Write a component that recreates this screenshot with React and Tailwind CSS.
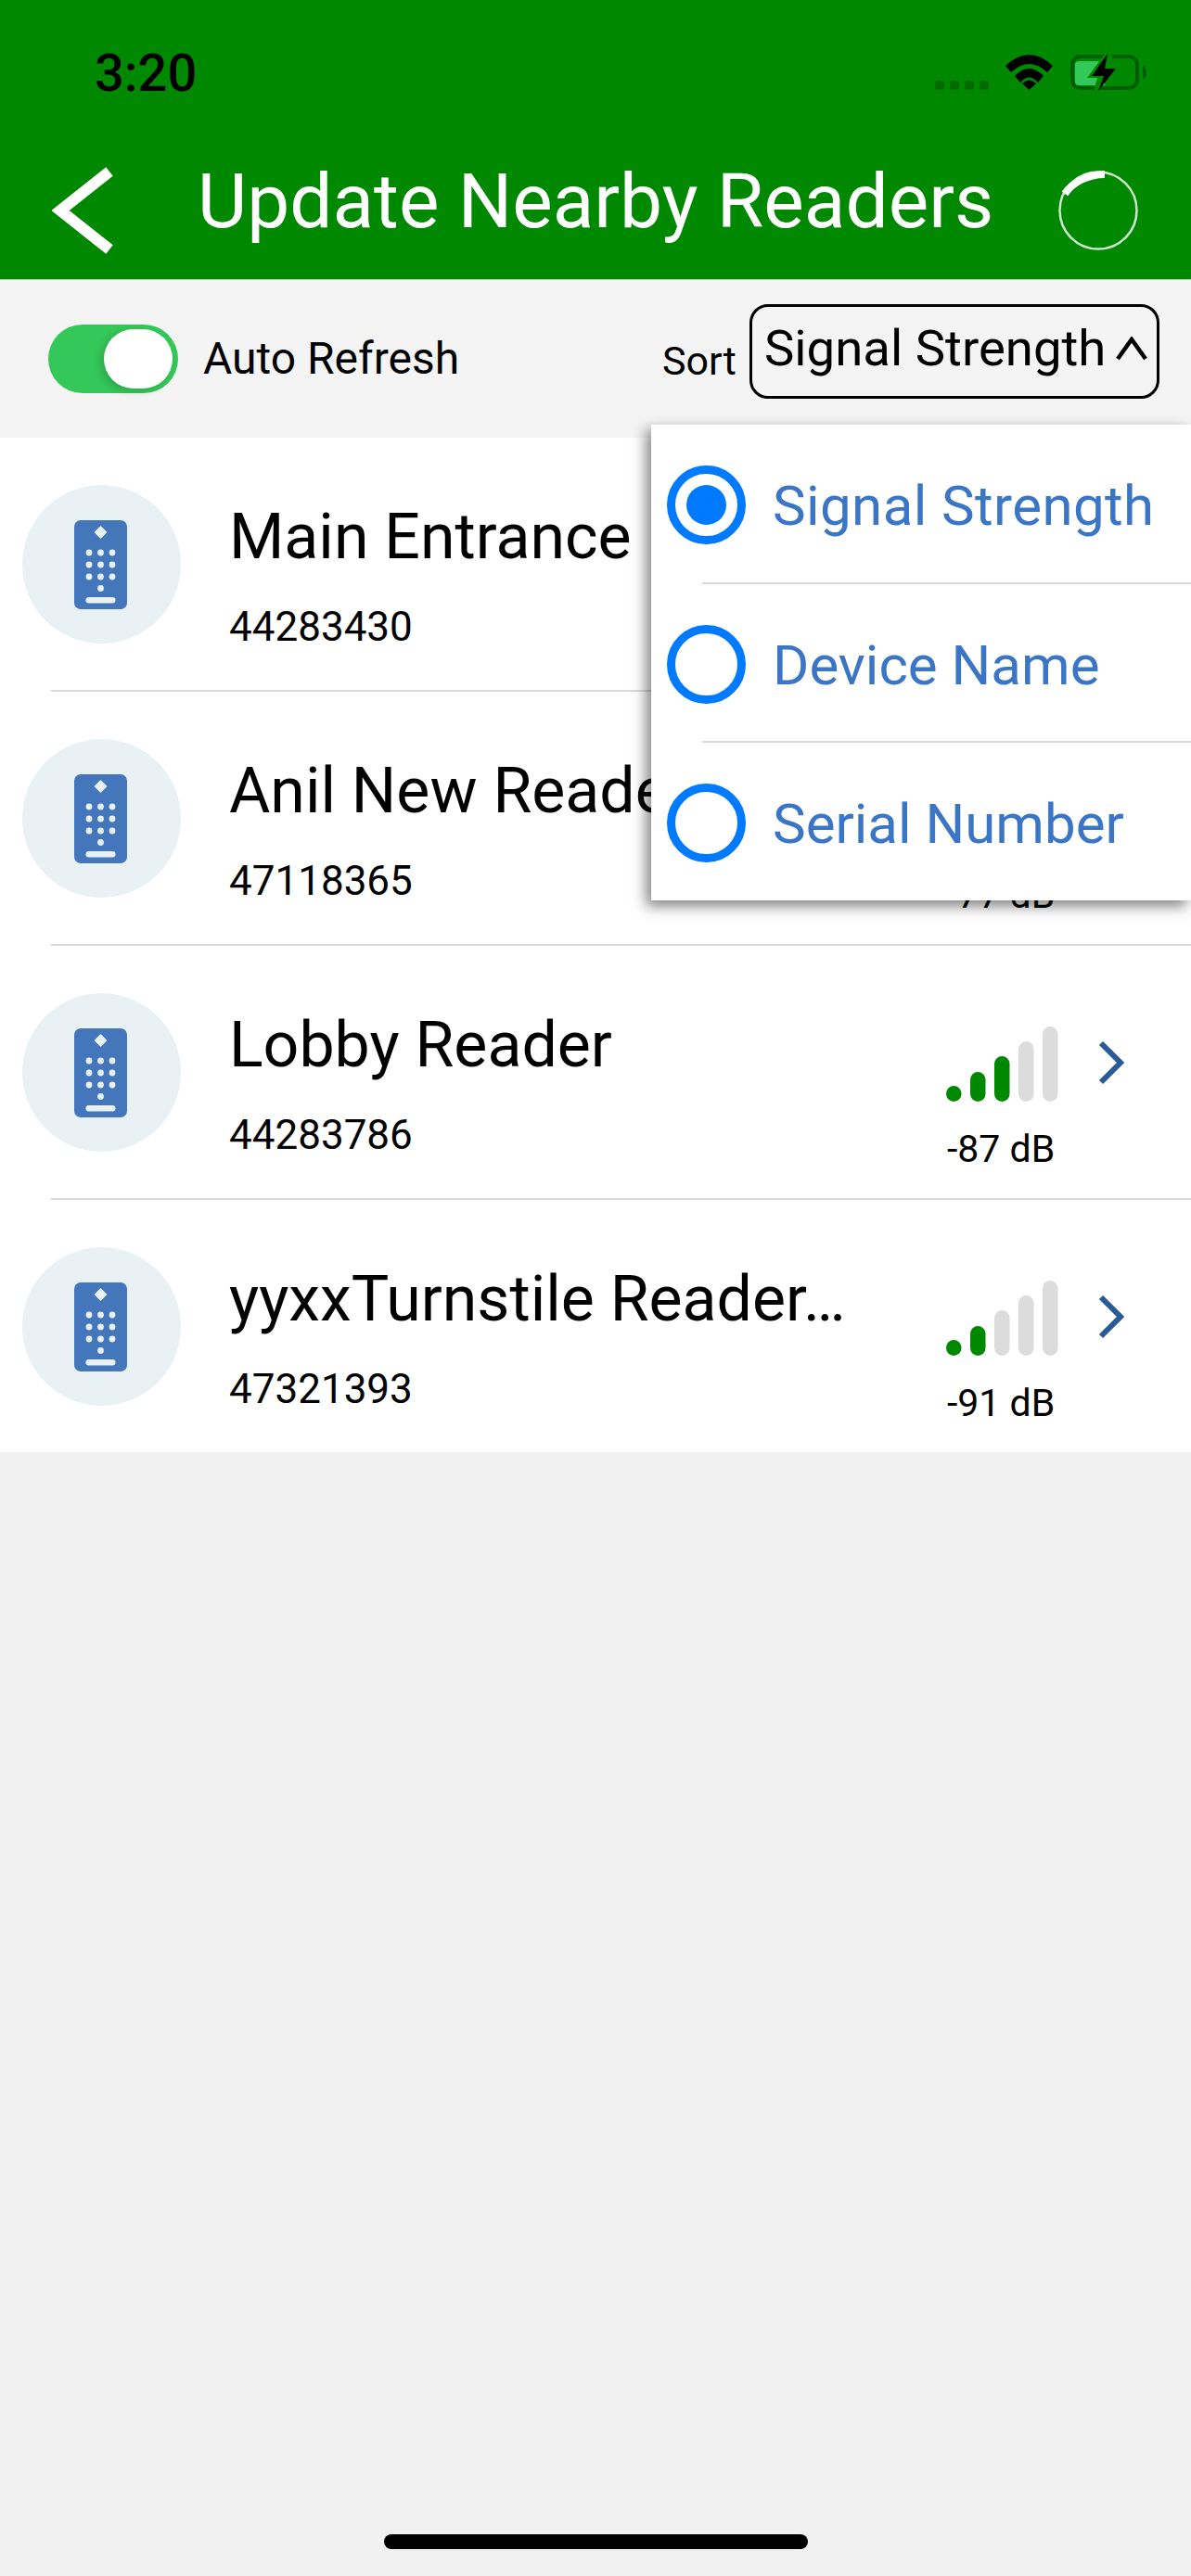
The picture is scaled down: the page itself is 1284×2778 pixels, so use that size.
const FONT = "font-['Roboto',sans-serif]";

function Remote() {
  const ys = [596, 609, 622];
  const xs = [96, 108.5, 121];
  return (
    <svg width="171" height="171" viewBox="24 523 171 171" className="shrink-0">
      <circle cx="109.5" cy="608.5" r="85.5" fill="#e9f1f5" />
      <rect x="80" y="561" width="57" height="96" rx="7" fill="#4376bb" />
      <path d="M108.5 568l6 6-6 6-6-6z" fill="#e9f1f5" stroke="#e9f1f5" strokeWidth="1.5" strokeLinejoin="round" />
      {ys.map((y) => xs.map((x) => <circle key={`${x}-${y}`} cx={x} cy={y} r="3.4" fill="#e9f1f5" />))}
      <circle cx="108.5" cy="634.5" r="3.4" fill="#e9f1f5" />
      <rect x="92.5" y="644" width="32" height="6.5" rx="3.2" fill="#e9f1f5" />
    </svg>
  );
}

function Signal({ level }) {
  const bars = [
    { x: 0, h: 17 },
    { x: 26, h: 32 },
    { x: 52, h: 49 },
    { x: 78, h: 65 },
    { x: 104, h: 81 },
  ];
  return (
    <svg width="121" height="81" viewBox="0 0 121 81" className="block">
      {bars.map((b, i) => (
        <rect key={b.x} x={b.x} y={81 - b.h} width="16.5" height={b.h} rx="8.25" fill={i < level ? "#008800" : "#dcdcdc"} />
      ))}
    </svg>
  );
}

function Row({ name, serial, db, level, last }) {
  return (
    <div>
      <div className="flex h-[272px] items-center pl-[24px]">
        <Remote />
        <div className="ml-[52px] flex w-[773px] shrink-0 flex-col pt-[25px]">
          <div className="text-[68px] leading-[80px] text-black">{name}</div>
          <div className="mt-[31px] text-[44px] leading-[52px] text-black">{serial}</div>
        </div>
        <div className="flex w-[164px] shrink-0 flex-col self-start pt-[87px]">
          <Signal level={level} />
          <div className="ml-[1px] mt-[27px] text-[41px] leading-[48px] text-black">{db}</div>
        </div>
        <svg width="28" height="48" viewBox="0 0 28 48" className="mb-[21px] shrink-0">
          <path d="M3 3l21 21-21 21" fill="none" stroke="#2a5a97" strokeWidth="6" />
        </svg>
      </div>
      {!last && <div className="ml-[55px] h-[2px] bg-[#d9d9d9]" />}
    </div>
  );
}

function Option({ label, selected, last, rowClass, textClass }) {
  return (
    <div>
      <div className={`flex items-center pl-[17px] ${rowClass}`}>
        <div className="mt-[3px] flex h-[85px] w-[85px] shrink-0 items-center justify-center rounded-full border-[9px] border-[#007aff] bg-white">
          {selected && <div className="h-[43px] w-[43px] rounded-full bg-[#007aff]" />}
        </div>
        <div className={`ml-[29px] pt-[6px] text-[60px] leading-none text-[#3b76c6] ${textClass}`}>{label}</div>
      </div>
      {!last && <div className="ml-[55px] h-[2px] bg-[#d9d9d9]" />}
    </div>
  );
}

export default function App() {
  return (
    <div className={`relative flex h-[2778px] w-[1284px] flex-col overflow-hidden bg-[#f1f1f1] ${FONT}`}>
      {/* Header */}
      <div className="flex h-[302px] shrink-0 flex-col border-b border-b-[#b8c9b8] bg-[#008800]">
        <div className="flex h-[169px] shrink-0 items-start justify-between pl-[102px] pr-[48px] pt-[50px]">
          <div className="text-[56px] font-medium leading-[58px] text-black">3:20</div>
          <svg width="230" height="42" viewBox="1005 57 230 42" className="mt-[7px]">
            {[1007, 1023, 1039, 1055].map((x) => (
              <rect key={x} x={x} y="87" width="10" height="10" rx="3" fill="#006a00" />
            ))}
            <path d="M1083 71Q1108.500 47 1134 71L1128 78Q1108.500 60 1089 78Z" fill="#000" />
            <path d="M1093 82Q1108.500 66 1124 82L1118 89Q1108.500 78 1099 89Z" fill="#000" />
            <path d="M1101 90Q1108.500 83 1116 90L1108.500 97Z" fill="#000" />
            <rect x="1155" y="61" width="70" height="34" rx="9" fill="none" stroke="#005c00" strokeWidth="4" />
            <path d="M1231 71c3 1 4 4 4 7s-1 6-4 7z" fill="#005c00" />
            <path d="M1158 70a4 4 0 0 1 4-4h28v26h-28a4 4 0 0 1-4-4z" fill="#34c759" />
            <path d="M1193 54l-22 30 11 0-5 18 30-30-11 0 3-16z" fill="#008800" />
            <path d="M1193 58l-17 24h13l-6 16 19-24h-12z" fill="#000" />
          </svg>
        </div>
        <div className="flex items-center pl-[56px] pr-[56px]">
          <svg width="68" height="96" viewBox="0 0 68 96" className="shrink-0">
            <path d="M62 6L9 48l53 42" fill="none" stroke="#fff" strokeWidth="12" />
          </svg>
          <div className="mb-[19px] ml-[89px] flex-1 text-[82px] leading-[96px] text-white">Update Nearby Readers</div>
          <svg width="88" height="88" viewBox="0 0 88 88" className="shrink-0">
            <circle cx="44" cy="44" r="41.500" fill="none" stroke="#ffffff" strokeOpacity="0.8" strokeWidth="2.500" />
            <path d="M8 26C16 14 32 5 51 5" fill="none" stroke="#fff" strokeWidth="8" />
          </svg>
        </div>
      </div>

      {/* Toolbar */}
      <div className="flex h-[170px] shrink-0 items-start bg-[#f4f4f4] pl-[52px]">
        <div className="relative mt-[48px] h-[74px] w-[140px] shrink-0 rounded-full bg-[#34c759]">
          <div className="absolute left-[60px] top-[5px] h-[64px] w-[74px] rounded-full bg-white shadow-[-4px_3px_8px_rgba(0,0,0,0.15)]" />
        </div>
        <div className="ml-[27px] mt-[57px] w-[495px] shrink-0 text-[48px] leading-[56px] text-black">Auto Refresh</div>
        <div className="mt-[62px] w-[94px] shrink-0 text-[43px] leading-[50px] text-black">Sort</div>
        <div className="mt-[26px] flex h-[102px] w-[442px] shrink-0 items-start rounded-[20px] border-[3px] border-black pl-[13px]">
          <div className="mt-[13px] w-[379px] shrink-0 text-[54.5px] leading-[62px] text-black">Signal Strength</div>
          <svg width="34" height="26" viewBox="0 0 34 26" className="mt-[32px] shrink-0">
            <path d="M2 24L17 3l15 21" fill="none" stroke="#000" strokeWidth="4.5" />
          </svg>
        </div>
      </div>

      {/* List */}
      <div className="shrink-0 bg-white">
        <Row name="Main Entrance" serial="44283430" db="-71 dB" level={4} />
        <Row name="Anil New Reader" serial="47118365" db="-77 dB" level={4} />
        <Row name="Lobby Reader" serial="44283786" db="-87 dB" level={3} />
        <Row name="yyxxTurnstile Reader…" serial="47321393" db="-91 dB" level={2} last />
      </div>

      {/* Home indicator */}
      <div className="mb-[29px] ml-[414px] mt-auto h-[16px] w-[457px] rounded-full bg-black" />

      {/* Sort menu */}
      <div className="absolute left-[702px] right-0 top-[458px] bg-white shadow-[-5px_6px_14px_rgba(0,0,0,0.5)]">
        <Option label="Signal Strength" selected rowClass="h-[170px]" textClass="tracking-[0.4px]" />
        <Option label="Device Name" rowClass="h-[169px]" />
        <Option label="Serial Number" last rowClass="h-[170px]" />
      </div>
    </div>
  );
}
